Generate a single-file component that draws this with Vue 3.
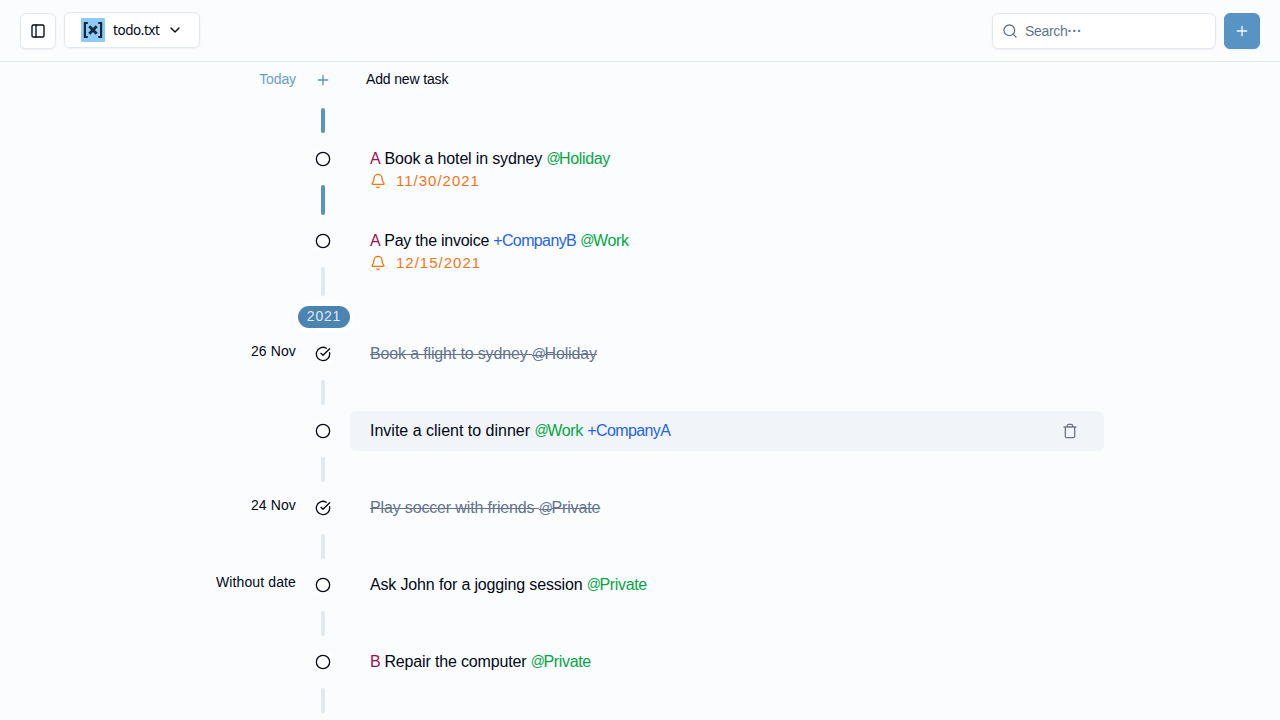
<script setup>
const items = [
  { id: 1, active: true, priority: 'A', cls: 'snug', parts: [['Book a hotel in sydney '], ['@Holiday', 'context']], due: '11/30/2021' },
  { id: 2, priority: 'A', cls: 'tight', short: true, parts: [['Pay the invoice '], ['+CompanyB', 'project'], [' '], ['@Work', 'context']], due: '12/15/2021' },
  { id: 3, year: '2021', label: '26 Nov', cls: 'snug', done: true, parts: [['Book a flight to sydney @Holiday']] },
  { id: 4, hover: true, parts: [['Invite a client to dinner '], ['@Work', 'context'], [' '], ['+CompanyA', 'project']] },
  { id: 5, label: '24 Nov', cls: 'snug', done: true, parts: [['Play soccer with friends @Private']] },
  { id: 6, label: 'Without date', cls: 'snug', parts: [['Ask John for a jogging session '], ['@Private', 'context']] },
  { id: 7, priority: 'B', cls: 'snug', parts: [['Repair the computer '], ['@Private', 'context']] },
]

// The at sign is set slightly smaller than the letters around it.
const split = (text) => text.split(/(@)/).filter(Boolean)
</script>

<template>
  <div class="app">
    <header class="header">
      <button class="btn square" aria-label="Toggle menu">
        <svg class="icon" viewBox="0 0 24 24"><rect x="3" y="3" width="18" height="18" rx="2" /><path d="M9 3v18" /></svg>
      </button>
      <button class="btn file">
        <svg class="logo" viewBox="0 0 24 24">
          <rect width="24" height="24" rx="1" fill="#90caf9" />
          <path d="M6.800 5H3.900v14h2.900M17.200 5h2.900v14h-2.900" fill="none" stroke="#172837" stroke-width="2.200" />
          <path d="M8.300 8.200l7.400 7.600M15.700 8.200l-7.400 7.600" fill="none" stroke="#172837" stroke-width="2.800" />
        </svg>
        <span class="file-name">todo.txt</span>
        <svg class="icon chevron" viewBox="0 0 24 24"><path d="m6 9 6 6 6-6" /></svg>
      </button>
      <div class="search">
        <svg class="icon" viewBox="0 0 24 24"><circle cx="11" cy="11" r="8" /><path d="m21 21-4.300-4.300" /></svg>
        <span class="placeholder">Search<span class="dots">···</span></span>
      </div>
      <button class="btn square primary" aria-label="Add task">
        <svg class="icon" viewBox="0 0 24 24"><path d="M5 12h14M12 5v14" /></svg>
      </button>
    </header>

    <main class="timeline">
      <div class="item today">
        <div class="label">Today</div>
        <div class="rail">
          <div class="marker"><svg class="icon" viewBox="0 0 24 24"><path d="M5 12h14M12 5v14" /></svg></div>
          <i class="line active" />
        </div>
        <div class="add">Add new task</div>
      </div>

      <template v-for="item in items" :key="item.id">
        <div v-if="item.year" class="year"><span>{{ item.year }}</span></div>
        <div class="item" :class="{ short: item.short, tall: item.due }">
          <div class="label">{{ item.label }}</div>
          <div class="rail">
            <div class="marker">
              <svg v-if="item.done" class="icon box" viewBox="0 0 24 24"><path d="M21.801 10A10 10 0 1 1 17 3.335" /><path d="m9 11 3 3L22 4" /></svg>
              <svg v-else class="icon box" viewBox="0 0 24 24"><circle cx="12" cy="12" r="10" /></svg>
            </div>
            <i class="line" :class="{ active: item.active }" />
          </div>
          <div class="body" :class="{ hover: item.hover, done: item.done }">
            <div class="text" :class="item.cls"><template v-if="item.priority"><span class="priority">{{ item.priority }}</span>{{ ' ' }}</template><span v-for="(part, i) in item.parts" :key="i" :class="part[1]"><span v-for="(piece, j) in split(part[0])" :key="j" :class="{ at: piece === '@' }">{{ piece }}</span></span></div>
            <div v-if="item.due" class="due">
              <svg class="icon" viewBox="0 0 24 24"><path d="M10.268 21a2 2 0 0 0 3.464 0" /><path d="M3.262 15.326A1 1 0 0 0 4 17h16a1 1 0 0 0 .74-1.673C19.410 13.956 18 12.499 18 8A6 6 0 0 0 6 8c0 4.499-1.411 5.956-2.738 7.326" /></svg>
              <span>{{ item.due }}</span>
            </div>
            <svg v-if="item.hover" class="icon trash" viewBox="0 0 24 24"><path d="M3 6h18M19 6v14a2 2 0 0 1-2 2H7a2 2 0 0 1-2-2V6M8 6V4a2 2 0 0 1 2-2h4a2 2 0 0 1 2 2v2" /></svg>
          </div>
        </div>
      </template>
    </main>
  </div>
</template>

<style>
body { background: #fafcfe; overflow: hidden; }
</style>

<style scoped>
* { box-sizing: border-box; }
.app { height: 720px; overflow: hidden; background: #fafcfe; color: #020817; font: 14px/20px "Liberation Sans", sans-serif; white-space: pre; }
.icon { width: 16px; height: 16px; flex: none; fill: none; stroke: currentColor; stroke-width: 2; stroke-linecap: round; stroke-linejoin: round; display: block; }
.header { display: flex; align-items: center; gap: 8px; height: 62px; padding: 0 20px; border-bottom: 1px solid #e2e8f0; }
.btn, .search { display: flex; align-items: center; height: 36px; margin: 0; border: 1px solid #e2e8f0; border-radius: 6px; background: #fff; color: #020817; box-shadow: 0 1px 2px rgba(0, 0, 0, .05); font: inherit; }
.square { width: 36px; padding: 0; justify-content: center; }
.file { width: 136px; padding: 0 16px; margin-bottom: 2px; }
.logo { width: 24px; height: 24px; margin-right: 8px; }
.file-name { width: 46px; font: 400 13.500px/20px "Noto Sans", sans-serif; letter-spacing: -.45px; }
.chevron { margin-left: 8px; }
.search { width: 224px; margin-left: auto; padding: 0 9px; gap: 7px; color: #64748b; }
.placeholder { letter-spacing: -.3px; }
.dots { font-weight: 700; letter-spacing: 0; vertical-align: .5px; line-height: 1; }
.primary { background: #5793c3; border-color: #5793c3; color: #f8fafc; }
.timeline { width: 928px; margin: 0 auto; }
.item { display: grid; grid-template-columns: 120px 54px 754px; height: 77px; }
.item.tall { height: 82px; }
.item.short { height: 81px; }
.label { text-align: right; padding-top: 7px; letter-spacing: .12px; }
.today .label { color: #68a0cb; letter-spacing: -.1px; }
.today .marker { color: #5793c3; height: 36px; }
.rail { display: flex; flex-direction: column; align-items: center; justify-content: space-between; padding-bottom: 6px; }
.marker { height: 40px; display: flex; align-items: center; }
.box { background: #fff; }
.line { width: 4px; margin-top: 6px; flex: 1; border-radius: 2px; background: #e2e8f0; }
.today .line { margin-top: 10px; }
.line.active { background: #5793c3; }
.add { padding: 7px 16px; letter-spacing: -.15px; }
.body { position: relative; height: 40px; padding: 8px 20px; border-radius: 6px; font-size: 16px; line-height: 24px; }
.hover { background: #f1f5f9; }
.done { color: #64748b; }
.done .text { text-decoration: line-through; }
.text { width: max-content; height: 24px; }
.snug { letter-spacing: -.15px; }
.tight { letter-spacing: -.25px; }
.at { font-size: 14px; letter-spacing: -1.500px; line-height: 1; }
.context .at { vertical-align: .7px; }
.priority { color: #a3124f; letter-spacing: -.6px; }
.context { color: #06a544; letter-spacing: -.35px; }
.project { color: #2563eb; letter-spacing: -.63px; }
.due { display: flex; align-items: center; gap: 10px; height: 20px; color: #f97316; font-size: 15px; letter-spacing: 1px; }
.trash { position: absolute; right: 26px; top: 12px; color: #71788a; stroke-width: 2; }
.year { height: 32px; padding: 4px 0 0 122px; }
.year span { display: block; width: 52px; height: 22px; border-radius: 11px; background: #4b83b1; color: #e2e8f0; text-align: center; line-height: 21px; letter-spacing: .8px; box-shadow: 0 0 0 4px #fff; }
</style>
